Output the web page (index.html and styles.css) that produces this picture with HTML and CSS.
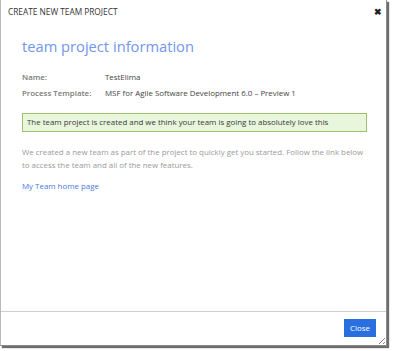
FILE: index.html
```html
<!DOCTYPE html>
<html>
<head>
<meta charset="utf-8">
<link rel="stylesheet" href="styles.css">
</head>
<body>
<div class="dialog">
  <div class="titlebar">
    <span class="title">CREATE NEW TEAM PROJECT</span>
    <span class="close-x">&#10006;</span>
  </div>
  <div class="content">
    <h1 class="heading">team project information</h1>
    <div class="info">
      <div class="row"><span class="label">Name:</span><span class="value">TestElima</span></div>
      <div class="row"><span class="label">Process Template:</span><span class="value">MSF for Agile Software Development 6.0 – Preview 1</span></div>
    </div>
    <div class="success">The team project is created and we think your team is going to absolutely love this</div>
    <p class="desc">We created a new team as part of the project to quickly get you started. Follow the link below to access the team and all of the new features.</p>
    <a class="link" href="#">My Team home page</a>
  </div>
  <div class="footer">
    <button class="btn">Close</button>
    <span class="grip"></span>
  </div>
</div>
</body>
</html>
```
FILE: styles.css
```css
html, body { margin: 0; padding: 0; background: #fff; }
body { font-family: "Open Sans", "Noto Sans", sans-serif; width: 393px; height: 351px; overflow: hidden; }
.dialog {
  width: 387px; height: 346px; box-sizing: border-box;
  border-left: 1px solid #b9b9b9; border-right: 1px solid #8a8a8a; border-bottom: 1px solid #8a8a8a;
  box-shadow: 2px 2px 1px #6e6e6e;
  background: #fff; display: flex; flex-direction: column;
}
.titlebar { display: flex; justify-content: space-between; align-items: center; padding: 4px 4px 0 7px; height: 15px; }
.title { font-size: 8.3px; color: #333; }
.close-x { font-size: 9px; color: #222; font-weight: bold; }
.content { padding: 0 19px 0 21px; flex: 1; }
.heading { margin: 15px 0 0 0; font-weight: normal; font-size: 14.7px; color: #7196ec; line-height: 24px; }
.info { margin-top: 11px; font-size: 7.9px; }
.row { display: flex; height: 16px; align-items: center; }
.label { width: 83px; color: #7a7a7a; font-weight: 600; }
.value { color: #444; }
.success { margin-top: 12px; border: 1px solid #9cc36c; background: #e8f6dc; color: #3a3a3a; font-size: 7.9px; padding: 3px 4px; line-height: 11px; }
.desc { margin: 14px 0 0 0; color: #9a9a9a; font-size: 7.9px; line-height: 13px; }
.link { display: block; margin-top: 8px; color: #4a78df; font-size: 7.9px; line-height: 13px; text-decoration: none; }
.footer { height: 33px; border-top: 1px solid #cfcfcf; display: flex; justify-content: flex-end; align-items: flex-start; position: relative; }
.btn { margin: 7px 10px 0 0; background: #2a6fe0; color: #fff; border: none; font-family: inherit; font-size: 7.9px; padding: 0 6px; height: 18px; width: 32px; }
.grip { position: absolute; right: 1px; bottom: 1px; width: 9px; height: 9px;
  background: repeating-linear-gradient(135deg, transparent 0 2px, #888 2px 3px);
  clip-path: polygon(100% 0, 100% 100%, 0 100%); }
```
